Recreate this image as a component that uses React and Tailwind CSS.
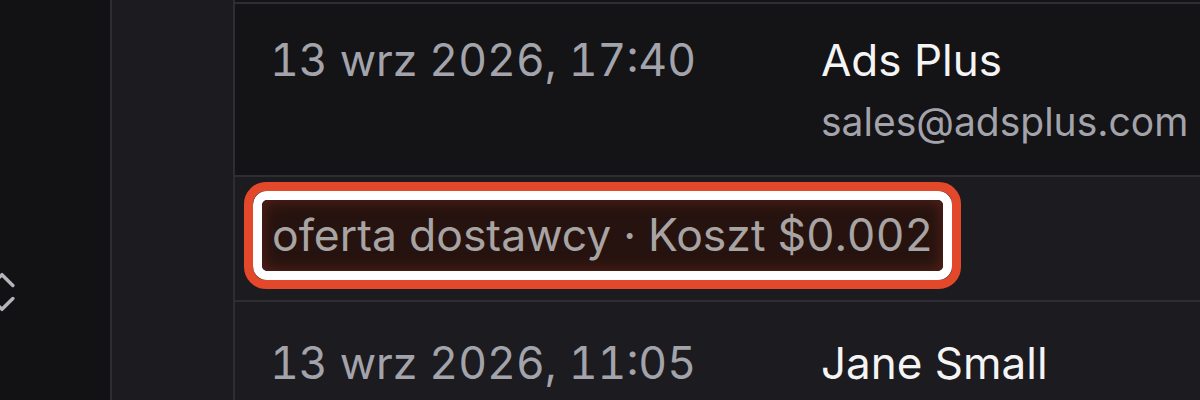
import React from "react";

function ChevronsUpDown({ className }) {
  return (
    <svg viewBox="0 0 24 24" fill="none" stroke="currentColor" strokeWidth="1.6" strokeLinecap="round" strokeLinejoin="round" className={className}>
      <path d="m7 15 5 5 5-5" />
      <path d="m7 9 5-5 5 5" />
    </svg>
  );
}

export default function App() {
  return (
    <div
      className="flex h-[400px] w-[1200px] overflow-hidden bg-[#141316]"
      style={{ fontFamily: "Inter, 'Noto Sans', sans-serif" }}
    >
      <div className="flex w-[110px] shrink-0 flex-col bg-[#121114]">
        <ChevronsUpDown className="ml-[-24px] mt-[266px] h-[52px] w-[52px] text-[#b4b4bb]" />
      </div>
      <div className="w-[2px] shrink-0 bg-[#2e2d33]" />
      <div className="w-[121px] shrink-0 bg-[#1c1b1f]" />
      <div className="w-[2px] shrink-0 bg-[#2e2d33]" />
      <div className="flex min-w-0 flex-1 flex-col pt-[2px]">
        <div className="flex h-[175px] shrink-0 border-y-2 border-[#2e2d33] bg-[#141316] pt-[30px]">
          <div className="w-[586px] shrink-0 pl-[35px] text-[44.5px] leading-[53px] tabular-nums text-[#a3a3ab]">
            13 wrz 2026, 17:40
          </div>
          <div className="flex flex-col">
            <div className="text-[44px] leading-[53px] text-[#f4f4f5]">Ads Plus</div>
            <div className="mt-[12px] whitespace-nowrap text-[39px] leading-[46px] text-[#a3a3ab]">
              sales@adsplus.com
            </div>
          </div>
        </div>
        <div className="flex h-[125px] shrink-0 items-start border-b-2 border-[#2e2d33] bg-[#1c1b1f] pl-[9px] pt-[5px]">
          <div className="rounded-[22px] border-[9px] border-[#e3482a]">
            <div className="rounded-[14px] border-[9px] border-white">
              <div className="whitespace-nowrap rounded-[6px] bg-[#26130f] px-[10px] py-[9px] text-[44.5px] leading-[53px] tabular-nums text-[#a8a4a4] shadow-[inset_0_0_16px_rgba(140,48,34,0.55)]">
                oferta dostawcy · Koszt $0.002
              </div>
            </div>
          </div>
        </div>
        <div className="flex flex-1 bg-[#1c1b1f] pt-[35px]">
          <div className="w-[586px] shrink-0 pl-[35px] text-[44.5px] leading-[53px] tabular-nums text-[#a3a3ab]">
            13 wrz 2026, 11:05
          </div>
          <div className="text-[44px] leading-[53px] text-[#f4f4f5]">Jane Small</div>
        </div>
      </div>
    </div>
  );
}
